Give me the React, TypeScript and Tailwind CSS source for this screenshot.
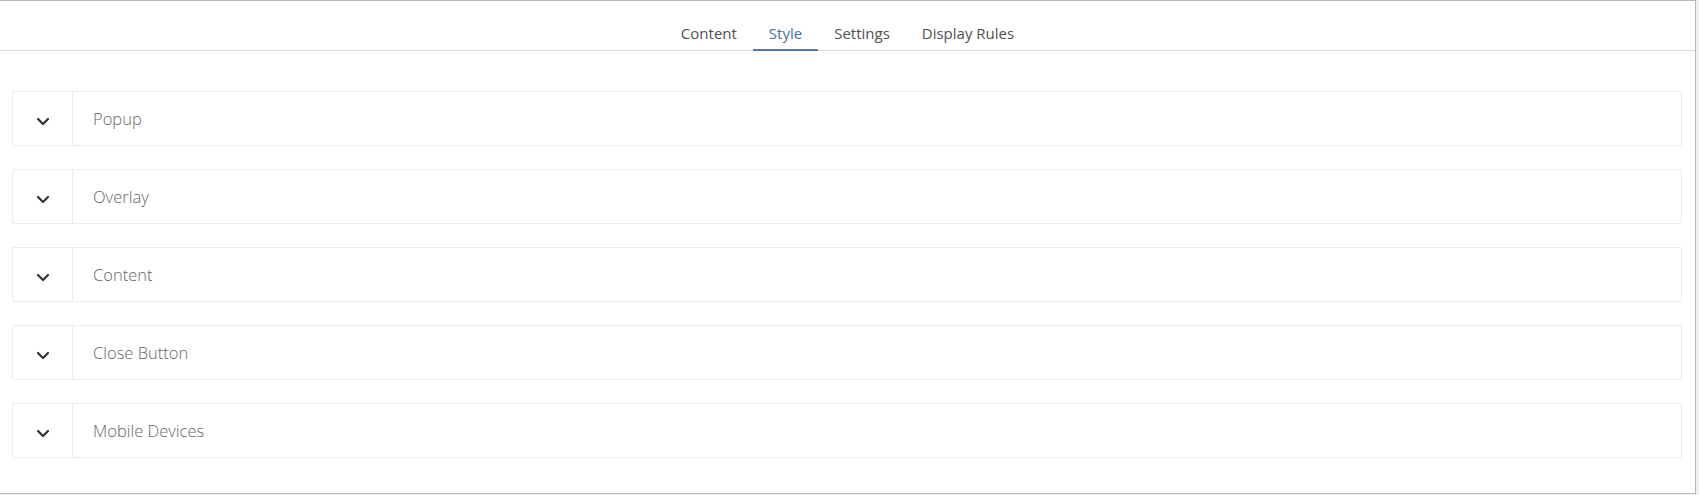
import React, { useState } from 'react'

const TABS = ['Content', 'Style', 'Settings', 'Display Rules']
const SECTIONS = ['Popup', 'Overlay', 'Content', 'Close Button', 'Mobile Devices']

function Chevron() {
  return (
    <svg width="14" height="9" viewBox="0 0 14 9" fill="none" className="mt-[6px]">
      <path d="M2 2l5 5 5-5" stroke="#333" strokeWidth="2.2" strokeLinecap="round" strokeLinejoin="round" />
    </svg>
  )
}

export default function App(): JSX.Element {
  const [active, setActive] = useState('Style')

  return (
    <div className="w-[1699px] h-[495px] bg-[#f0f0f0] font-['Open_Sans',sans-serif]">
      <div className="w-[1696px] h-[494px] bg-white border-t border-r border-b border-[#b8b8b8]">
        <div className="h-[50px] border-b border-[#dcdcdc] flex justify-center items-end">
          {TABS.map((t) => (
            <button
              key={t}
              onClick={() => setActive(t)}
              className={
                t === active
                  ? 'h-[50px] px-[16px] pt-[17px] text-[15px] text-[#4d6f9c] border-b-2 border-[#5b7aa0] -mb-px'
                  : 'h-[50px] px-[16px] pt-[17px] text-[15px] text-[#4f4f4f]'
              }
            >
              {t}
            </button>
          ))}
        </div>
        <div className="pl-[12px] pr-[13px] pt-[40px] flex flex-col gap-[23px]">
          {SECTIONS.map((s) => (
            <div key={s} className="h-[55px] flex border border-[#ececec] rounded-[2px]">
              <div className="w-[60px] flex items-center justify-center border-r border-[#ececec]">
                <Chevron />
              </div>
              <div className="flex items-center pl-[20px] pt-[2px] text-[16.5px] font-light text-[#666]">{s}</div>
            </div>
          ))}
        </div>
      </div>
    </div>
  )
}
